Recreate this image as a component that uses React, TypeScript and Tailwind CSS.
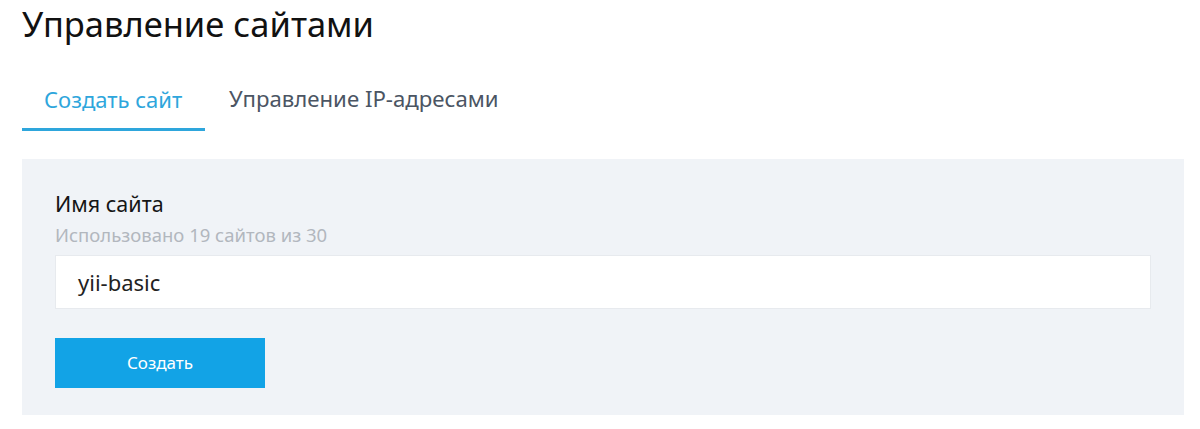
export default function App() {
  return (
    <div className="min-h-[429px] bg-white pl-[22px] pr-4 pt-[2px] font-['Noto_Sans',sans-serif]">
      <h1 className="text-[34.5px] leading-[44px] text-[#111111]">Управление сайтами</h1>

      <div className="mt-[38px] flex">
        <div className="flex w-[183px] flex-col">
          <span className="pl-[22px] text-[22px] leading-[30px] text-[#2ea6dc]">Создать сайт</span>
          <div className="mt-[14px] h-[3px] bg-[#2ea6dc]" />
        </div>
        <span className="ml-[24px] text-[22.2px] leading-[30px] text-[#4b5563]">Управление IP-адресами</span>
      </div>

      <div className="mt-[28px] h-[256px] w-[1162px] bg-[#f0f3f7] px-[33px] pt-[31px]">
        <div className="text-[21.5px] leading-[27px] text-[#151515]">Имя сайта</div>
        <div className="mt-[6px] text-[18.5px] leading-[24px] text-[#b2b7be]">Использовано 19 сайтов из 30</div>
        <div className="mt-[8px] flex h-[54px] w-[1096px] items-center border border-[#e7eaee] bg-white pl-[22px] text-[22px] text-[#222222]">
          yii-basic
        </div>
        <button className="mt-[29px] h-[50px] w-[210px] bg-[#12a3e6] text-[17px] text-white">Создать</button>
      </div>
    </div>
  );
}
